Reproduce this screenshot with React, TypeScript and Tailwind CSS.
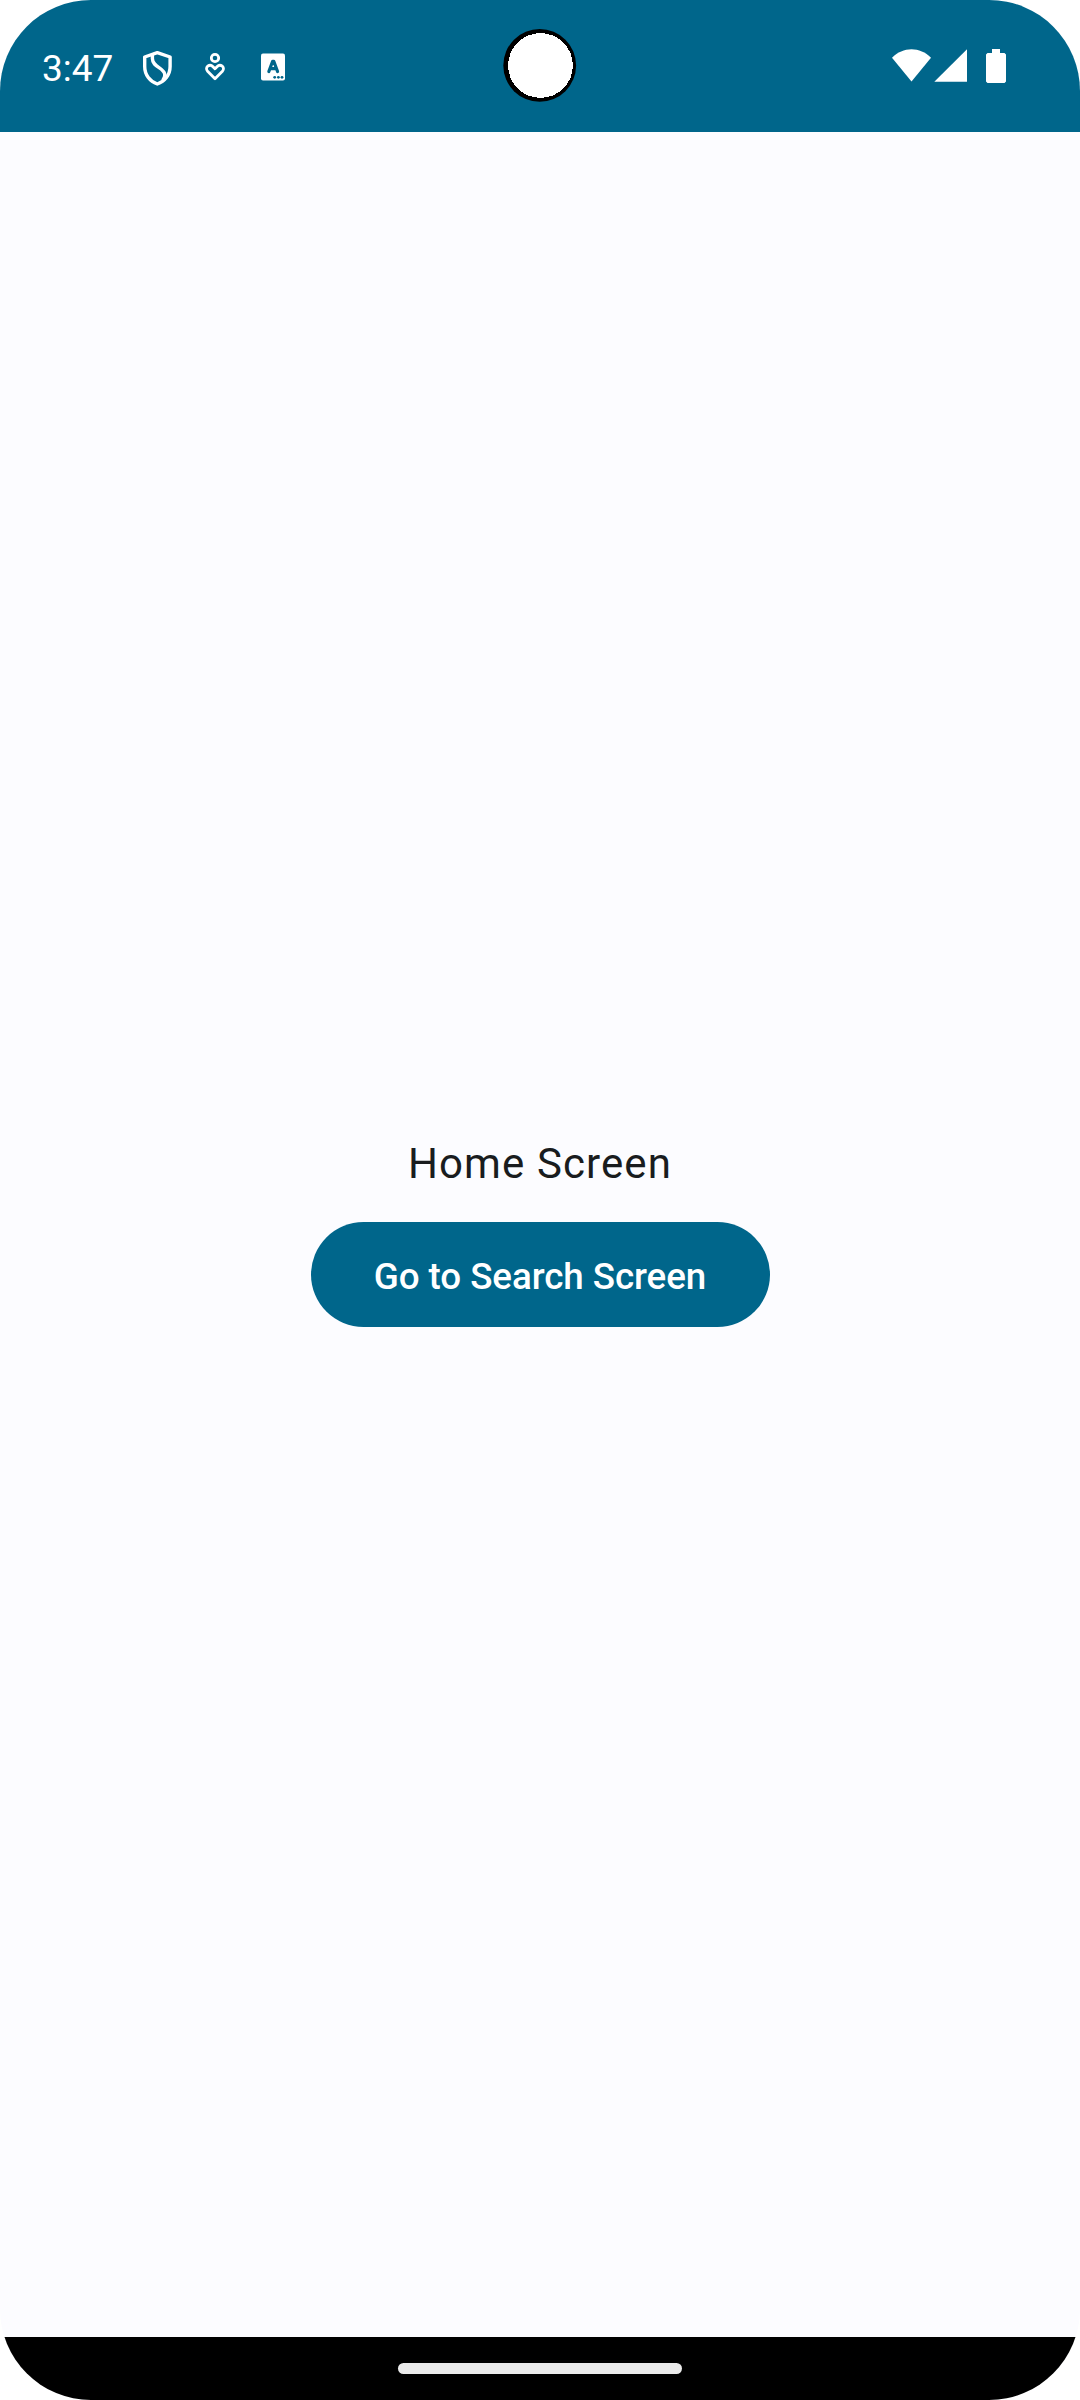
function ShieldIcon() {
  return (
    <svg className="h-[40px] w-[34px]" viewBox="140 46 34 40" fill="none" stroke="#fff" strokeWidth="3.4" strokeLinejoin="round" strokeLinecap="round">
      <path d="M157.3 51.6 L144.7 56 V65.5 C144.7 74 150 80.5 157.3 83 C164.6 80.5 170.1 74 170.1 65.5 V56 Z" />
      <path d="M152.4 53.6 V57.5 C152.4 66.5 164.8 66.5 164.8 74 C164.8 75.8 164.2 77.2 163.2 78.6" />
    </svg>
  );
}

function WellbeingIcon() {
  return (
    <svg className="h-[34px] w-[28px]" viewBox="201 50 28 34" fill="none" stroke="#fff" strokeWidth="2.8" strokeLinejoin="round">
      <circle cx="215" cy="58" r="3.7" />
      <path d="M215 78.7 L207.6 71.3 C204.2 67.5 209.6 63 213 66.7 L215 68.8 L217 66.7 C220.4 63 225.8 67.5 222.4 71.3 Z" />
    </svg>
  );
}

function KeyboardIcon() {
  return (
    <svg className="h-[28px] w-[26px]" viewBox="260 53 26 28">
      <rect x="261" y="53.6" width="24" height="27" rx="2" fill="#fff" />
      <path d="M268.8 71.6 L272.6 61.4 H273.8 L277.6 71.6 M270.4 68.6 H276" fill="none" stroke="#00668b" strokeWidth="3.1" strokeLinecap="round" strokeLinejoin="round" />
      <g fill="#00668b">
        <circle cx="274.7" cy="77.3" r="1.4" />
        <circle cx="278.4" cy="77.3" r="1.4" />
        <circle cx="282" cy="77.3" r="1.4" />
      </g>
    </svg>
  );
}

function SystemIcons() {
  return (
    <svg className="mt-[47px] h-[38px] w-[116px]" viewBox="891 47 116 38" fill="#fff">
      <path d="M911.5 81.6 L892 57.8 C903 46.4 920 46.4 931 57.8 Z" />
      <path d="M934.3 81.7 L967 49.2 V81.7 Z" />
      <path d="M992 49 H1000 V53 H1004.5 L1006 54.5 V81.5 L1004.5 83 H987.5 L986 81.5 V54.5 L987.5 53 H992 Z" />
    </svg>
  );
}

function StatusBar() {
  return (
    <header className="relative flex h-[132px] shrink-0 justify-between bg-[#00668b] pl-[42px] pr-[73px] text-white">
      <div className="flex h-[134px] items-center">
        <span className="w-[98px] pt-[3px] text-[37px] leading-[44px]">3:47</span>
        <div className="flex items-center">
          <ShieldIcon />
          <div className="ml-[27px]">
            <WellbeingIcon />
          </div>
          <div className="ml-[31px]">
            <KeyboardIcon />
          </div>
        </div>
      </div>
      <SystemIcons />
      <svg className="absolute left-[503px] top-[28px] h-[74px] w-[74px]" viewBox="503 28 74 74">
        <circle cx="539.7" cy="65.4" r="36.4" />
        <circle cx="540.5" cy="65.5" r="32.4" fill="#fff" shapeRendering="crispEdges" />
      </svg>
    </header>
  );
}

export default function App() {
  return (
    <div className="h-[2400px] w-[1080px] bg-white">
      <div className="flex h-full flex-col overflow-hidden rounded-[91px] bg-[#fcfcff] font-['Roboto',sans-serif]">
        <StatusBar />
        <main className="flex flex-1 flex-col items-center pt-[1000px]">
          <p className="text-[42px] leading-[63px] tracking-[1.1px] text-[#191c1e]">Home Screen</p>
          <button className="mt-[27px] h-[105px] w-[459px] rounded-full bg-[#00668b] pt-[4px] text-[36.75px] font-medium leading-[52px] tracking-[-0.08px] text-white">
            Go to Search Screen
          </button>
        </main>
        <footer className="flex h-[63px] shrink-0 justify-center bg-black pt-[26px]">
          <div className="h-[11px] w-[284px] rounded-full bg-[#ebebeb]" />
        </footer>
      </div>
    </div>
  );
}
